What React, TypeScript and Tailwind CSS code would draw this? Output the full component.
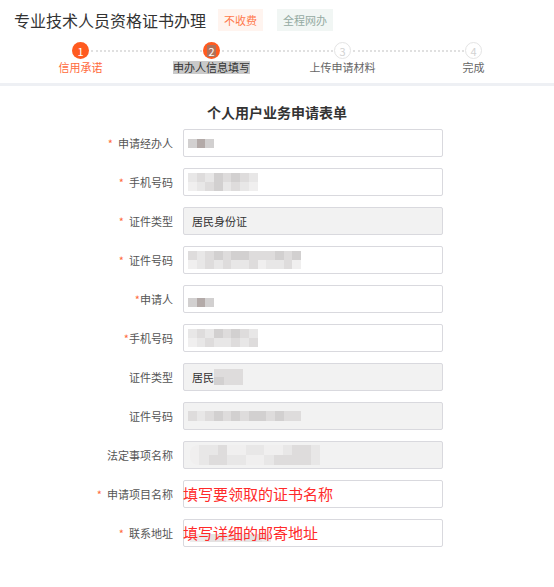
import React from "react";

type Cell = "a" | "b" | "c" | "d" | "e" | "f" | "w";

const cellClass: Record<Cell, string> = {
  a: "bg-[#c4bfbf]",
  b: "bg-[#b3aaa8]",
  c: "bg-[#d2d0d0]",
  d: "bg-[#dedcdc]",
  e: "bg-[#e8e7e7]",
  f: "bg-[#f0efef]",
  w: "bg-transparent",
};

const Mosaic: React.FC<{ rows: string[]; cell?: string; className?: string }> = ({
  rows,
  cell = "w-[8.7px] h-[9px]",
  className = "",
}) => (
  <div className={`flex flex-col blur-[0.5px] ${className}`}>
    {rows.map((row, i) => (
      <div key={i} className="flex">
        {row.split("").map((c, j) => (
          <div key={j} className={`${cell} ${cellClass[c as Cell]}`} />
        ))}
      </div>
    ))}
  </div>
);

const steps = [
  { n: "1", label: "信用承诺", state: "done" },
  { n: "2", label: "申办人信息填写", state: "current" },
  { n: "3", label: "上传申请材料", state: "todo" },
  { n: "4", label: "完成", state: "todo" },
];

const Star: React.FC<{ tight?: boolean }> = ({ tight }) => (
  <span className={`text-[#ff6a3c] ${tight ? "" : "mr-[5px]"}`}>*</span>
);

type Row = {
  label: string;
  star?: "space" | "tight";
  gray?: boolean;
  content?: React.ReactNode;
};

const rows: Row[] = [
  {
    label: "申请经办人",
    star: "space",
    content: <Mosaic rows={["cbc"]} className="ml-[4px]" />,
  },
  {
    label: "手机号码",
    star: "space",
    content: <Mosaic rows={["edecdcde", "fedcedef"]} className="ml-[4px]" />,
  },
  {
    label: "证件类型",
    star: "space",
    gray: true,
    content: <span className="ml-[8px] text-[11px] text-[#333]">居民身份证</span>,
  },
  {
    label: "证件号码",
    star: "space",
    content: <Mosaic rows={["dedcdccdddcdc", "fededeedfeedf"]} className="ml-[4px]" />,
  },
  {
    label: "申请人",
    star: "tight",
    content: <Mosaic rows={["cbc"]} className="ml-[4px] mt-[6px]" />,
  },
  {
    label: "手机号码",
    star: "tight",
    content: <Mosaic rows={["edecdcde", "fedeeded"]} className="ml-[4px]" />,
  },
  {
    label: "证件类型",
    gray: true,
    content: (
      <>
        <span className="ml-[8px] text-[11px] text-[#333]">居民</span>
        <Mosaic rows={["ddd", "cdd"]} cell="w-[9.5px] h-[8px]" />
      </>
    ),
  },
  {
    label: "证件号码",
    gray: true,
    content: <Mosaic rows={["dedcdcdccdcdd"]} cell="w-[8.7px] h-[10px]" className="ml-[4px]" />,
  },
  {
    label: "法定事项名称",
    gray: true,
    content: (
      <Mosaic
        rows={["feedffeeffedde", "feddeeffedddde"]}
        cell="w-[9.3px] h-[10px]"
        className="ml-[6px] rounded-l-[8px] overflow-hidden"
      />
    ),
  },
  {
    label: "申请项目名称",
    star: "space",
    content: (
      <span className="-ml-[1px] text-[15px] leading-[28px] text-[#ff2a2a]">
        填写要领取的证书名称
      </span>
    ),
  },
  {
    label: "联系地址",
    star: "space",
    content: (
      <>
        <Mosaic
          rows={["eeddeedde"]}
          cell="w-[9px] h-[8px]"
          className="absolute left-[6px] top-[14px] opacity-80"
        />
        <span className="relative -ml-[1px] text-[15px] leading-[28px] text-[#ff2a2a]">
          填写详细的邮寄地址
        </span>
      </>
    ),
  },
];

export default function App() {
  return (
    <div className="w-[554px] h-[587px] bg-white overflow-hidden font-['Noto_Sans_CJK_SC','Microsoft_YaHei',sans-serif] text-[#333]">
      {/* header */}
      <div className="flex items-center h-[40px] pl-[14px]">
        <h1 className="text-[16px] leading-[20px] font-normal text-[#333]">
          专业技术人员资格证书办理
        </h1>
        <span className="ml-[12px] h-[22px] px-[6px] flex items-center bg-[#fff4ef] text-[11px] text-[#ff7a4d]">
          不收费
        </span>
        <span className="ml-[14px] h-[22px] px-[6px] flex items-center bg-[#f1f6f4] text-[11px] text-[#94aaa2]">
          全程网办
        </span>
      </div>

      {/* steps */}
      <div className="grid grid-cols-4 mx-[15px] h-[43px]">
        {steps.map((s, i) => (
          <div key={s.n} className="relative flex flex-col items-center pt-[2px]">
            {i < steps.length - 1 && (
              <span className="absolute top-[10px] left-[calc(50%+10px)] w-[calc(100%-20px)] border-t-2 border-dotted border-[#e0e0e0]" />
            )}
            <div
              className={`relative z-10 w-[17px] h-[17px] rounded-full flex items-center justify-center text-[11px] leading-[12px] ${
                s.state === "todo"
                  ? "bg-white border border-[#e4e4e4] text-[#d2d2d2]"
                  : "bg-[#ff5a1f] text-white"
              }`}
            >
              {s.state === "current" ? (
                <span className="bg-[#8c7a74]/70 px-[1px] text-[#fff]">{s.n}</span>
              ) : (
                s.n
              )}
            </div>
            <div
              className={`mt-[2px] text-[11px] leading-[13px] ${
                s.state === "done"
                  ? "text-[#ff6a3c]"
                  : s.state === "current"
                    ? "bg-[#c9c9c9] text-[#333]"
                    : "text-[#666]"
              }`}
            >
              {s.label}
            </div>
          </div>
        ))}
      </div>
      <div className="h-[3px] bg-[#eef0f4]" />

      {/* form */}
      <h2 className="mt-[16px] text-center text-[14px] leading-[20px] font-bold text-[#333]">
        个人用户业务申请表单
      </h2>
      <div className="mt-[7px] flex flex-col gap-[11px]">
        {rows.map((r, i) => (
          <div key={i} className="flex items-center">
            <label className="w-[183px] pr-[10px] text-right text-[11px] leading-[14px] text-[#555]">
              {r.star && <Star tight={r.star === "tight"} />}
              {r.label}
            </label>
            <div
              className={`relative w-[260px] h-[28px] flex items-center border border-[#d9d9de] rounded-[2px] ${
                r.gray ? "bg-[#f2f2f2]" : "bg-white"
              }`}
            >
              {r.content}
            </div>
          </div>
        ))}
      </div>
    </div>
  );
}
